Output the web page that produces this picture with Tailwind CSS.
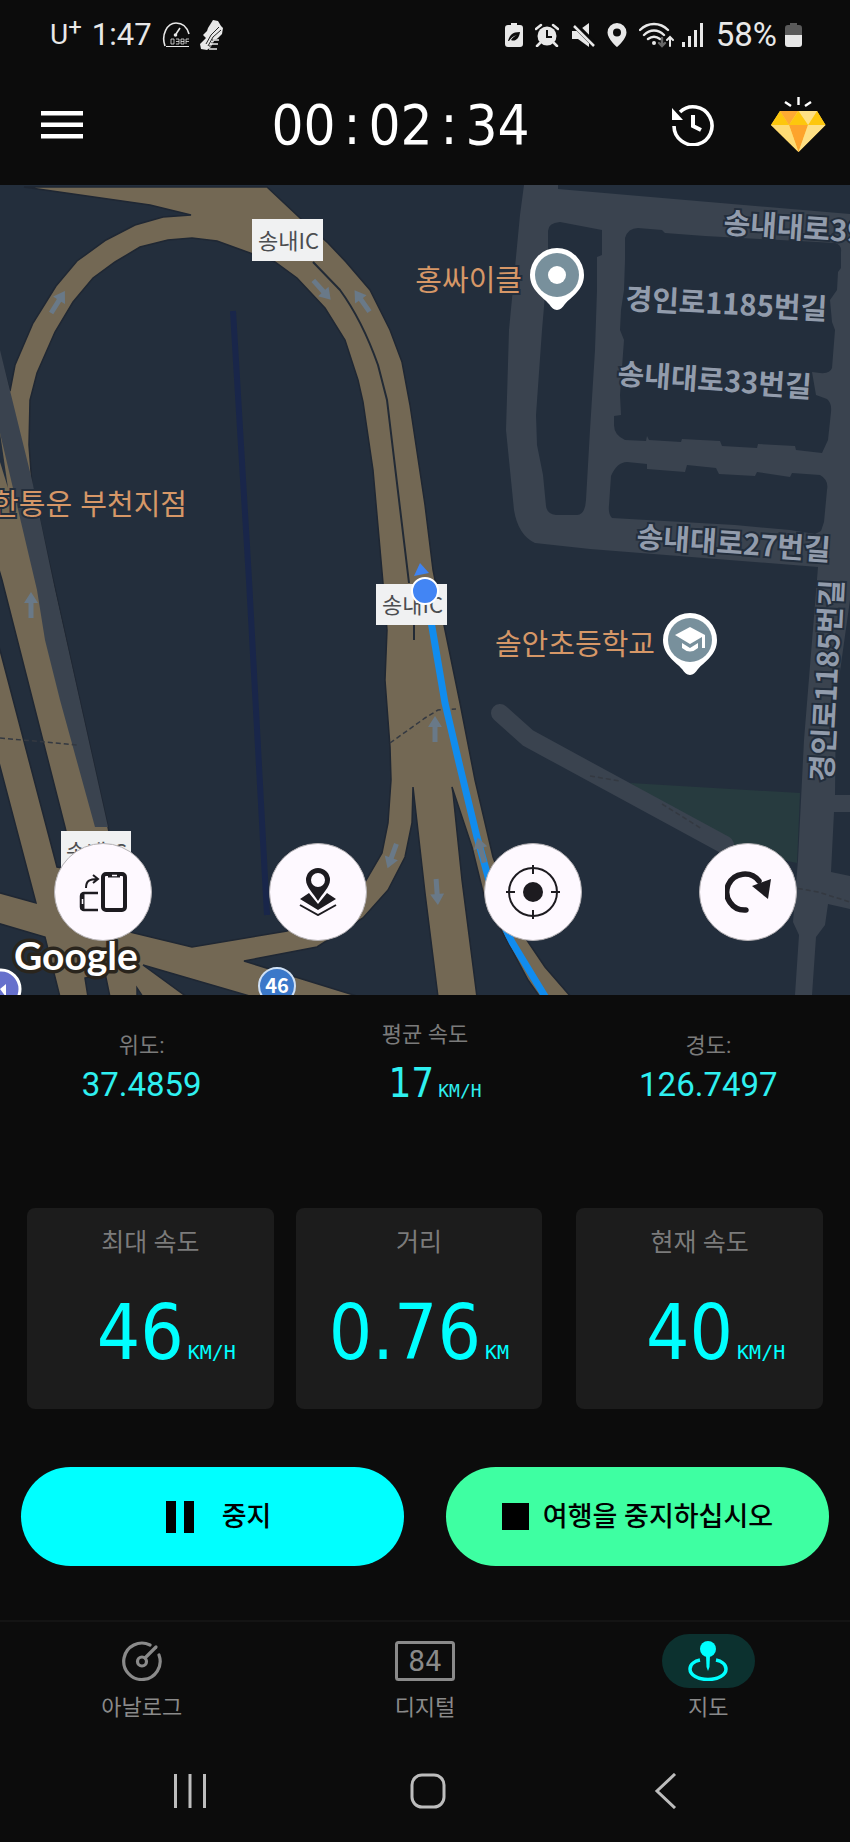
<!DOCTYPE html>
<html lang="ko">
<head>
  <meta charset="UTF-8">
  <meta name="viewport" content="width=device-width, initial-scale=1.0">
  <title>GPS 속도계 - 지도</title>
  <script src="https://cdn.jsdelivr.net/npm/@tailwindcss/browser@4"></script>
</head>
<body class="bg-[#0c0c0c] font-[Roboto,'Noto_Sans_CJK_KR',sans-serif] text-white">
  <div class="flex min-h-screen flex-col">

    <!-- Status bar -->
    <div class="flex h-[70px] items-center justify-between pr-12 pl-[50px] text-[31px] leading-8 text-[#e8e8e8]">
      <div class="flex items-center gap-[10px]">
        <span class="flex"><span class="text-[28px]">U</span><span class="-mt-1 text-[24px] leading-6">+</span></span>
        <span>1:47</span>
        <svg class="h-7 w-7" viewBox="0 0 28 28" fill="none" stroke="currentColor">
          <path d="M3 25C-1 14 5 2 14 2c6 0 11 4 13 11" stroke-width="1.6" />
          <path d="M14 13l4-6" stroke-width="1.6" />
          <circle cx="13.500" cy="14" r="1.800" fill="currentColor" stroke="none" />
          <path d="M4 25.500h23" stroke-width="1" />
          <path d="M9 18h3v5H9zM14 18h3v5h-3M14 20.500h3M19 18h3v5h-3zM19 20.500h3M24 23v-5h3M24 20.500h3" stroke-width=".8" />
        </svg>
        <svg class="h-8 w-6" viewBox="0 0 24 32" fill="currentColor">
          <path d="M13 1l5 1 3 5 2 2-1 6-4 4-4 3-3 6-4 3-6-1-1-5 6-6-3-3 4-4 1-3z" />
          <path d="M6 25l5-9 8-8M8 27l5-9 8-7M12 21h7M11 24h7M9 27h8" fill="none" stroke="#0c0c0c" stroke-width=".9" />
          <path d="M13 21h6M11 25h7M9 30h8" stroke="currentColor" stroke-width="1.500" />
        </svg>
      </div>
      <div class="flex items-center gap-3">
        <svg class="h-6 w-[18px]" viewBox="0 0 18 24">
          <path d="M6 0h6v2h3a3 3 0 0 1 3 3v16a3 3 0 0 1-3 3H3a3 3 0 0 1-3-3V5a3 3 0 0 1 3-3h3z" fill="currentColor" />
          <path d="M3 18c2-6 4-9 12-9-1 7-5 10-9 8 2-3 4-4 6-5-4 1-6 3-8 6z" fill="#0c0c0c" />
        </svg>
        <svg class="h-6 w-6" viewBox="0 0 24 24" fill="none" stroke="currentColor">
          <circle cx="12" cy="13" r="9.500" fill="currentColor" stroke="none" />
          <path d="M1 6l5-4M23 6l-5-4M5 20l-3 3M19 20l3 3" stroke-width="2.500" stroke-linecap="round" />
          <path d="M12 7v7h5" stroke="#0c0c0c" stroke-width="2" />
        </svg>
        <svg class="h-6 w-6" viewBox="0 0 24 24">
          <path d="M1 8h6l11-8v24L7 16H1z" fill="currentColor" />
          <path d="M2 0l22 22" stroke="#0c0c0c" stroke-width="6" />
          <path d="M3 3l20 20" stroke="currentColor" stroke-width="2.500" />
        </svg>
        <svg class="h-6 w-5" viewBox="0 0 20 24" fill="currentColor">
          <path fill-rule="evenodd" d="M10 0a9.500 9.500 0 0 1 9.500 9.500C19.500 16 10 24 10 24S.5 16 .5 9.500A9.500 9.500 0 0 1 10 0zm0 5.500a4 4 0 1 0 0 8 4 4 0 0 0 0-8z" />
        </svg>
        <svg class="-mr-1 h-[26px] w-[35px]" viewBox="0 0 35 26" fill="none" stroke="currentColor" stroke-width="2.400" stroke-linecap="round">
          <path d="M1 8c8-8 20-8 28 0M5 13c6-6 14-6 20 0M9 17c4-3 8-3 12 0" />
          <circle cx="15" cy="21" r="2" fill="currentColor" stroke="none" />
          <path d="M23 16v7M20 21l3 3 3-3" stroke="#666" />
          <path d="M31 24v-8M28 18l3-3 3 3" stroke-width="2" />
        </svg>
        <svg class="h-6 w-[22px]" viewBox="0 0 22 24" fill="currentColor">
          <path d="M0 19h3v5H0zM6 13h3v11H6zM12 7h3v17h-3zM18 0h3v24h-3z" />
        </svg>
        <span class="-mr-1 text-[33px]">58%</span>
        <svg class="h-6 w-[17px]" viewBox="0 0 17 24">
          <path d="M5 0h7v2h2a3 3 0 0 1 3 3v7H0V5a3 3 0 0 1 3-3h2z" fill="#5a5a5a" />
          <path d="M0 12h17v9a3 3 0 0 1-3 3H3a3 3 0 0 1-3-3z" fill="currentColor" />
        </svg>
      </div>
    </div>

    <!-- App bar -->
    <header class="flex h-[115px] items-center pr-6 pb-[6px] pl-[41px]">
      <button class="w-[88px]" aria-label="메뉴">
        <svg class="h-7 w-[42px]" viewBox="0 0 42 28" fill="white">
          <path d="M0 0h42v4.500H0zM0 11.500h42V16H0zM0 23h42v4.500H0z" />
        </svg>
      </button>
      <div class="flex flex-1 justify-center font-['DejaVu_Sans_Condensed','DejaVu_Sans',sans-serif] text-[56px] leading-[56px]">
        <span>00</span><span class="px-2">:</span><span>02</span><span class="px-2">:</span><span>34</span>
      </div>
      <button class="mr-[57px]" aria-label="기록">
        <svg class="h-[42px] w-[42px]" viewBox="0 0 42 42" fill="none" stroke="white" stroke-width="3.600">
          <path d="M2 22a19 19 0 1 0 6-14" />
          <path d="M21 11v11l8 4" stroke-width="4" />
          <path d="M0 4v12h11z" fill="white" stroke="none" />
        </svg>
      </button>
      <button aria-label="프리미엄">
        <svg class="h-14 w-[55px]" viewBox="0 0 55 56">
          <path d="M14 5l6 4M27.500 0v8M40 5l-6 4" stroke="white" stroke-width="2.400" />
          <path d="M9 14h37l8.500 14L27.500 55 0 28z" fill="#fdd24e" />
          <path d="M9 14l9 14H0zM46 14l-9 14h17.500z" fill="#fdc70d" />
          <path d="M9 14h18l-9 14z" fill="#fdaa33" />
          <path d="M27 14h19l-9 14z" fill="#fee085" />
          <path d="M27.500 14L37 28H18z" fill="#fdc70d" />
          <path d="M18 28h19l-9.500 27z" fill="#fda32c" />
          <path d="M37 28h17.500l-27 27z" fill="#fee085" />
          <path d="M0 28h18l9.500 27z" fill="#fedb74" />
        </svg>
      </button>
    </header>

    <!-- Map -->
    <section class="relative">
      <svg class="block w-full font-['Noto_Sans_CJK_KR',sans-serif]" viewBox="0 185 850 810">
        <defs>
          <path id="arrow" d="M-2.500 13V-2H-7L0-13 7-2H2.500V13z" fill="#697988" />
          <path id="pin" d="M0 35C-3 35-6 32-8 29-14 22-27 15-27 0A27 27 0 0 1 27 0C27 15 14 22 8 29 6 32 3 35 0 35z" fill="white" />
        </defs>
        <path d="M0 185h850v810H0z" fill="#232e3c" />

        <!-- park -->
        <path d="M630 783L800 793 797 863 735 850z" fill="#273b3f" />

        <!-- side streets -->
        <path d="M524 185H558V189L850 214V600L836 700 835 795H850V812H834L831 872 850 876V909L828 904 825 925 816 937 812 995H795L799 935 793 922 798 860 804 740 818 567 590 549 535 543Q518 535 514 510L506 430 509 330 520 215z" fill="#3a434f" />
        <path d="M548 231Q548 223 560 222L602 230 602 255 597 257V290L595 350 590 430 586 500Q585 515 577 515L556 515Q547 514 546 506L543 475 537 445 536 415 542 330 548 260z" fill="#232e3c" />
        <path d="M625 238Q628 228 638 228L662 230 665 233 705 236 835 243Q842 245 841 252V268L838 272 837 290 830 300 832 322 835 330 832 368Q830 374 820 373L812 372 816 395 827 399Q832 403 831 412L828 440 822 453 796 450 795 446 758 444 757 448 722 446 720 441 682 439 681 442 649 440 647 436 646 441 625 440Q614 435 614 425V416L621 415 620 395 624 340 620 330 621 310 624 290 625 260z" fill="#232e3c" />
        <path d="M611 476Q617 462 627 462L647 464V469L685 472 687 465 716 468 719 474 755 476 757 472 790 477 792 473 820 475Q829 480 827 490L824 522 821 531 815 534 790 530 735 525 612 518Q608 514 609 505z" fill="#232e3c" />
        <path d="M500 713L528 738 550 750 725 845" fill="none" stroke="#3a434f" stroke-width="18" stroke-linecap="round" stroke-linejoin="round" />

        <path d="M233 311L249 580 267 915" fill="none" stroke="#19264a" stroke-width="6" />

        <!-- highways -->
        <path d="M24 187H267L300 218 328 243 346 262 370 290 390 330 402 362 410 405 425 505 433 570 445 630 460 703 475 780 493 857 520 930 545 967 571 997H540L528 980 505 937 485 900 472 847 452 787 453 793 462 880 477 997H438L425 893 413 787 412 823 405 857 388 890 363 918 317 947 244 961 360 997H253L143 965 187 997H143L137 988V997H110L105 973 85 978 88 997H60L45 937-3 923V892L36 903-3 755V345L10 391 15 365 33 323 56 286 77 261 106 240 135 225 163 217 191 215 150 205z
          M130 932L192 947 287 931 330 912 365 882 382 853 388 823 391 780 390 747 385 680 387 630 383 583 373 470 363 402 358 380 345 340 325 308 297 278 275 262 250 253 217 241 192 238 168 240 140 247 115 262 93 278 73 302 55 332 37 373 30 400 29 445 32 485 108 827z
          M-3 563L2 580 65 827 75 870 57 867 0 650-3 640z" fill="#736854" fill-rule="evenodd" stroke="#1f2733" stroke-width="1.500" />
        <path d="M0 433L8 488 0 462z" fill="#232e3c" />
        <path d="M0 350L32 480 55 590 108 827H95L60 700 45 640 37 590 0 433z" fill="#3a434f" />
        <path d="M313 262L340 290Q362 320 378 365L387 400 409 583M414 620V640" fill="none" stroke="#222a35" stroke-width="2" />
        <path d="M0 738L78 745M390 743L425 718 438 710 456 709M790 887L818 892 850 902M590 776L620 781M662 804L702 829" fill="none" stroke="#343941" stroke-width="1.500" stroke-dasharray="5 3" />

        <!-- route -->
        <path d="M427 600L432 627 445 703 460 767 477 837 487 873 Q498 915 512 942L546 998" fill="none" stroke="#118cee" stroke-width="7" />

        <!-- one-way arrows -->
        <use href="#arrow" transform="translate(58 302) rotate(32)" />
        <use href="#arrow" transform="translate(322 290) rotate(138)" />
        <use href="#arrow" transform="translate(362 301) rotate(-35)" />
        <use href="#arrow" transform="translate(31 605)" />
        <use href="#arrow" transform="translate(435 729)" />
        <use href="#arrow" transform="translate(392 856) rotate(200)" />
        <use href="#arrow" transform="translate(437 892) rotate(176)" />
        <use href="#arrow" transform="translate(481 850) rotate(-15)" />

        <!-- interchange signs -->
        <g font-size="22" fill="#4b4d50">
          <path d="M252 219h71v42h-71zM376 584h71v41h-71zM61 831h70v41H61z" fill="#f0f1f2" />
          <text x="258" y="249">송내IC</text>
          <text x="382" y="613">송내IC</text>
          <text x="66" y="860">송내IC</text>
        </g>
        <path d="M414 576l6-13 9 10z" fill="#3f83f0" />
        <circle cx="425" cy="591" r="13" fill="#4285f4" stroke="white" stroke-width="2" />

        <!-- street names -->
        <g font-size="29" font-weight="700" fill="#929cac" stroke="#232e3c" stroke-width="4" paint-order="stroke">
          <text transform="translate(723 233) rotate(4)">송내대로39</text>
          <text transform="translate(625 309) rotate(3)">경인로1185번길</text>
          <text transform="translate(617 384) rotate(4)">송내대로33번길</text>
          <text transform="translate(636 547) rotate(4)">송내대로27번길</text>
          <text transform="translate(832 782) rotate(-87)">경인로1185번길</text>
        </g>

        <!-- places -->
        <g font-size="29" fill="#d69767" stroke="#232e3c" stroke-width="4" paint-order="stroke">
          <text x="522" y="291" text-anchor="end">홍싸이클</text>
          <text x="655" y="655" text-anchor="end">솔안초등학교</text>
          <text x="187" y="515" text-anchor="end">한통운 부천지점</text>
        </g>
        <g transform="translate(557 275)">
          <use href="#pin" />
          <circle r="22" fill="#78909c" />
          <circle r="9" fill="white" />
        </g>
        <g transform="translate(690 640)">
          <use href="#pin" />
          <circle r="22" fill="#78909c" />
          <path d="M0-13L-15-5 0 4 12-3v11h3V-5zM-8 3v5Q0 15 8 8V3L0 8z" fill="white" />
        </g>

        <circle cx="277" cy="986" r="18" fill="#3b78c9" stroke="#cfe0f5" stroke-width="2" />
        <text x="277" y="993" text-anchor="middle" font-size="20" font-weight="700" fill="white">46</text>
        <circle cx="1" cy="989" r="19" fill="#6670cc" stroke="white" stroke-width="3" />
        <path d="M0 989l6-5v13z" fill="white" />
        <text class="font-[Lato,sans-serif]" x="14" y="970" font-size="39" font-weight="700" fill="white" stroke="#2a251d" stroke-width="7" stroke-linejoin="round" paint-order="stroke">Google</text>
      </svg>

      <!-- Map controls -->
      <div class="absolute inset-x-0 bottom-[54px] flex justify-between pr-[53px] pl-[54px] text-[#1d1b20]">
        <button class="grid h-[98px] w-[98px] place-items-center rounded-full border border-[#b5b2b5] bg-[#fef9ff]" aria-label="화면 회전">
          <svg class="h-10 w-12" viewBox="0 0 48 40" fill="none" stroke="currentColor">
            <rect x="24" y="2" width="22" height="36" rx="3" stroke-width="4" />
            <path d="M29 3.500h12" stroke-width="4" />
            <path d="M33 3.500h5" stroke="#fef9ff" stroke-width="1.500" />
            <path d="M19 21H5a3 3 0 0 0-3 3v11a3 3 0 0 0 3 3h14" stroke-width="2.500" />
            <path d="M3.500 21.500v16" stroke-width="4" />
            <path d="M3.500 27v5" stroke="#fef9ff" stroke-width="1.500" />
            <path d="M7 16c0-7 3-9 12-9M14 3l5 4-5 4" stroke-width="2" />
          </svg>
        </button>
        <button class="grid h-[98px] w-[98px] place-items-center rounded-full border border-[#b5b2b5] bg-[#fef9ff]" aria-label="지도 유형">
          <svg class="h-12 w-10" viewBox="0 0 40 48" fill="currentColor">
            <path d="M11 25L2 31l18 11 18-11-9-6-9 11z" />
            <path d="M2 37l18 10 18-10" fill="none" stroke="currentColor" stroke-width="2" />
            <path fill-rule="evenodd" d="M20 0a12 12 0 0 1 12 12c0 7-8 14-12 21C16 26 8 19 8 12A12 12 0 0 1 20 0zm0 5a7 7 0 1 0 0 14 7 7 0 0 0 0-14z" />
          </svg>
        </button>
        <button class="grid h-[98px] w-[98px] place-items-center rounded-full border border-[#b5b2b5] bg-[#fef9ff]" aria-label="내 위치">
          <svg class="h-14 w-14" viewBox="0 0 56 56" fill="none" stroke="currentColor" stroke-width="2">
            <circle cx="28" cy="28" r="24" />
            <circle cx="28" cy="28" r="10" fill="currentColor" stroke="none" />
            <path d="M28 1v9M28 46v9M1 28h9M46 28h9" />
          </svg>
        </button>
        <button class="grid h-[98px] w-[98px] place-items-center rounded-full border border-[#b5b2b5] bg-[#fef9ff]" aria-label="새로 고침">
          <svg class="h-[42px] w-[46px]" viewBox="0 0 46 42" fill="none" stroke="currentColor">
            <path d="M21 39A18 18 0 1 1 34 10" stroke-width="5.500" stroke-linecap="round" />
            <path d="M27 15l19-7-3 20z" fill="currentColor" stroke="none" />
          </svg>
        </button>
      </div>
    </section>

    <!-- Position and average speed -->
    <section class="mb-[101px] grid grid-cols-3 text-center text-[22px] leading-8 text-[#7b7b7b]">
      <div class="pt-[35px]">
        <p>위도:</p>
        <p class="mt-[3px] text-[33px] leading-10 text-[#2ff0f0]">37.4859</p>
      </div>
      <div class="pt-6">
        <p>평균 속도</p>
        <p class="mt-2 flex items-baseline justify-center gap-1 pl-5 leading-12 text-[#2ff0f0]">
          <span class="font-['DejaVu_Sans_Condensed','DejaVu_Sans',sans-serif] text-[40px]">17</span>
          <span class="font-['DejaVu_Sans_Mono',monospace] text-[18px] leading-none">KM/H</span>
        </p>
      </div>
      <div class="pt-[35px]">
        <p>경도:</p>
        <p class="mt-[3px] text-[33px] leading-10 text-[#2ff0f0]">126.7497</p>
      </div>
    </section>

    <!-- Trip stats -->
    <section class="flex gap-[22px] px-[27px] text-center text-[25px] leading-8 text-[#7b7b7b]">
      <div class="flex-1 rounded-lg bg-[#1c1c1c] pt-[19px] pb-9">
        <p>최대 속도</p>
        <p class="mt-[34px] flex items-baseline justify-center gap-1 pl-8 leading-20 text-[#00ffff]">
          <span class="font-['DejaVu_Sans_Condensed','DejaVu_Sans',sans-serif] text-[76px]">46</span>
          <span class="font-['DejaVu_Sans_Mono',monospace] text-[20px] leading-none">KM/H</span>
        </p>
      </div>
      <div class="flex-1 rounded-lg bg-[#1c1c1c] pt-[19px] pb-9">
        <p>거리</p>
        <p class="mt-[34px] flex items-baseline justify-center gap-1 leading-20 text-[#00ffff]">
          <span class="font-['DejaVu_Sans_Condensed','DejaVu_Sans',sans-serif] text-[76px]">0.76</span>
          <span class="font-['DejaVu_Sans_Mono',monospace] text-[20px] leading-none">KM</span>
        </p>
      </div>
      <div class="ml-3 flex-1 rounded-lg bg-[#1c1c1c] pt-[19px] pb-9">
        <p>현재 속도</p>
        <p class="mt-[34px] flex items-baseline justify-center gap-1 pl-8 leading-20 text-[#00ffff]">
          <span class="font-['DejaVu_Sans_Condensed','DejaVu_Sans',sans-serif] text-[76px]">40</span>
          <span class="font-['DejaVu_Sans_Mono',monospace] text-[20px] leading-none">KM/H</span>
        </p>
      </div>
    </section>

    <!-- Trip controls -->
    <section class="mt-[58px] mb-[54px] grid grid-cols-2 gap-[42px] px-[21px] text-[27px] leading-8 font-medium text-black">
      <button class="flex h-[99px] items-center justify-center gap-7 rounded-full bg-[#00ffff] pl-3">
        <svg class="h-8 w-7" viewBox="0 0 28 32"><path d="M0 0h10v32H0zM18 0h10v32H18z" /></svg>
        중지
      </button>
      <button class="flex h-[99px] items-center justify-center gap-[14px] rounded-full bg-[#3effa2]">
        <svg class="h-[27px] w-[27px]" viewBox="0 0 27 27"><path d="M0 0h27v27H0z" /></svg>
        여행을 중지하십시오
      </button>
    </section>

    <!-- Bottom navigation -->
    <nav class="grid h-[120px] grid-cols-3 border-t-2 border-[#141414] pt-3 text-[22px] leading-8 text-[#8a8a8a]">
      <a href="#analog" class="flex flex-col items-center">
        <span class="grid h-[54px] w-[93px] place-items-center">
          <svg class="h-10 w-10" viewBox="0 0 40 40" fill="none" stroke="currentColor" stroke-width="3.200" stroke-linecap="round">
            <path d="M28 4A18.200 18.200 0 1 0 37 14" />
            <circle cx="20" cy="20.500" r="4.500" />
            <path d="M23 17L34 6" />
          </svg>
        </span>
        <span class="mt-1">아날로그</span>
      </a>
      <a href="#digital" class="flex flex-col items-center">
        <span class="grid h-[54px] w-[93px] place-items-center">
          <svg class="h-10 w-[60px]" viewBox="0 0 60 40">
            <rect x="1.500" y="1.500" width="57" height="37" rx="2" fill="none" stroke="currentColor" stroke-width="3" />
            <text class="font-['DejaVu_Sans_Mono',monospace]" x="30" y="30" text-anchor="middle" font-size="28" fill="currentColor">84</text>
          </svg>
        </span>
        <span class="mt-1">디지털</span>
      </a>
      <a href="#map" class="flex flex-col items-center">
        <span class="grid h-[54px] w-[93px] place-items-center rounded-full bg-[#0c312f] text-[#00ffff]">
          <svg class="h-10 w-10" viewBox="0 0 40 40" fill="none" stroke="currentColor">
            <circle cx="20" cy="8" r="8" fill="currentColor" stroke="none" />
            <path d="M18 14h4l-.5 12L20 30l-1.500-4z" fill="currentColor" stroke="none" />
            <path d="M12 19c-5 1-10 4-10 9 0 6 8 10.500 18 10.500S38 34 38 28c0-5-5-8-10-9" stroke-width="3.500" />
          </svg>
        </span>
        <span class="mt-1">지도</span>
      </a>
    </nav>

    <!-- System navigation -->
    <div class="grid h-[102px] grid-cols-3 place-items-center pr-[65px] pl-[71px] text-[#bdbdbd]">
      <button aria-label="최근 앱">
        <svg class="h-9 w-9" viewBox="0 0 36 36" fill="none" stroke="currentColor" stroke-width="3"><path d="M3.500 1v34M18 1v34M32.500 1v34" /></svg>
      </button>
      <button aria-label="홈">
        <svg class="h-9 w-9" viewBox="0 0 36 36" fill="none" stroke="currentColor" stroke-width="3"><rect x="2" y="2" width="32" height="32" rx="10" /></svg>
      </button>
      <button aria-label="뒤로">
        <svg class="h-9 w-9" viewBox="0 0 36 36" fill="none" stroke="currentColor" stroke-width="3"><path d="M27 1L9 18l18 17" /></svg>
      </button>
    </div>
  </div>
</body>
</html>
